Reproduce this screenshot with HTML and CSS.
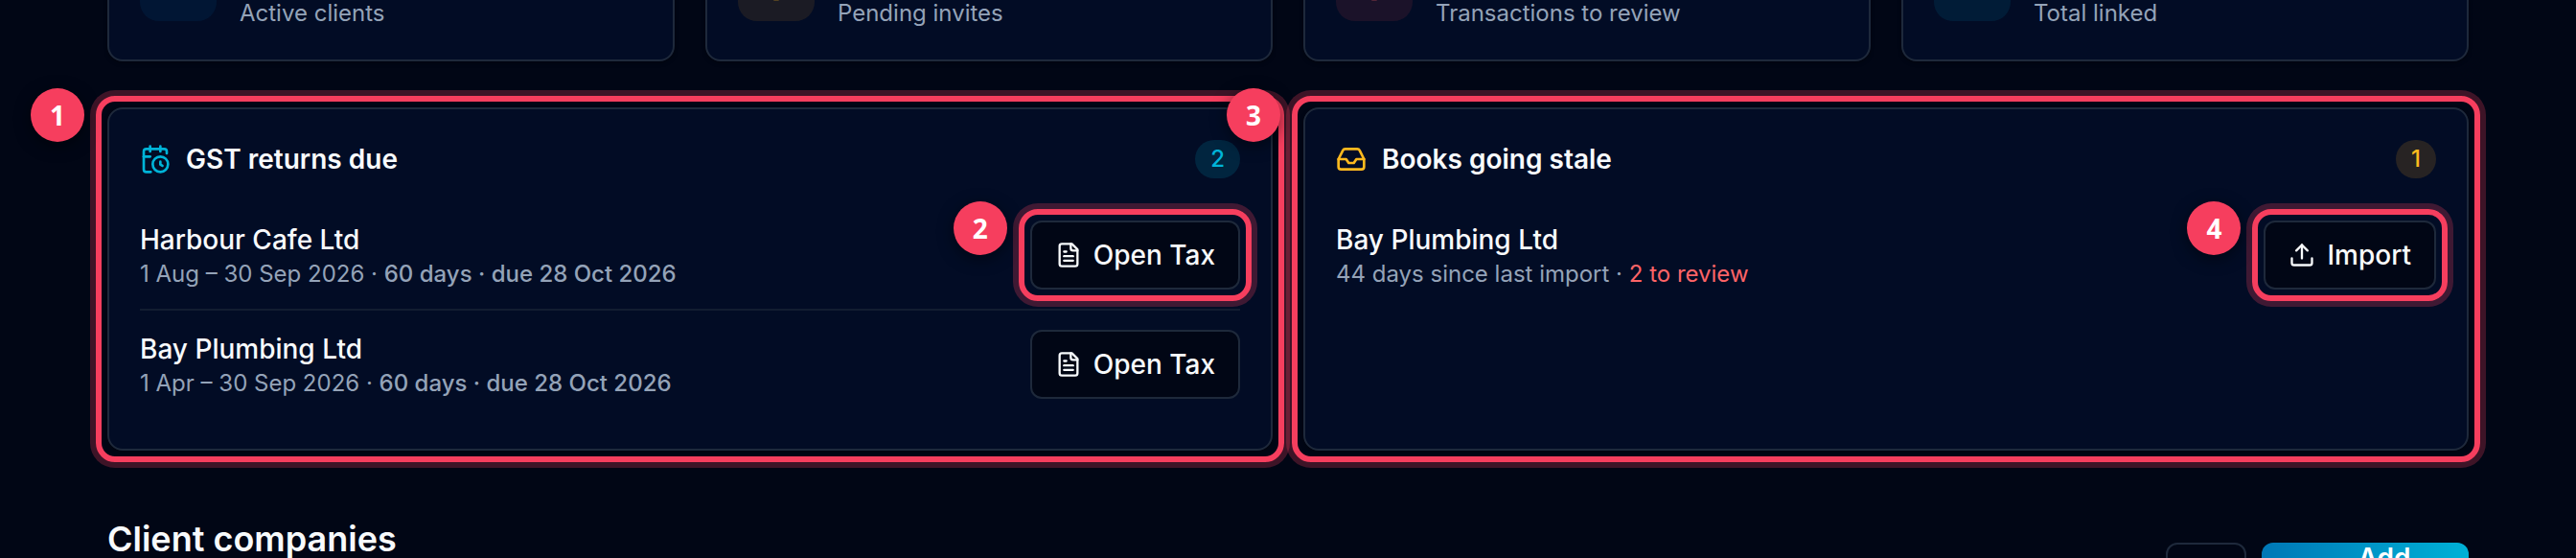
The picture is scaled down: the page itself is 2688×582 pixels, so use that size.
FILE: index.html
```html
<!doctype html>
<html lang="en">
<head>
    <meta charset="UTF-8">
    <meta name="viewport" content="width=device-width, initial-scale=1.0">
    <title>Client dashboard</title>
    <link rel="stylesheet" href="styles.css">
</head>
<body>
<main class="page">
    <section class="stats">
        <div class="card stat">
            <div class="tile tile-blue"></div>
            <p class="stat-label">Active clients</p>
        </div>
        <div class="card stat">
            <div class="tile tile-amber">
                <svg class="icon icon-lg" viewBox="0 0 24 24"><circle cx="12" cy="12" r="10"/><path d="M12 6v6l4 2"/></svg>
            </div>
            <p class="stat-label">Pending invites</p>
        </div>
        <div class="card stat">
            <div class="tile tile-red">
                <svg class="icon icon-lg" viewBox="0 0 24 24"><circle cx="12" cy="12" r="10"/><path d="M12 8v4"/><path d="M12 16h.01"/></svg>
            </div>
            <p class="stat-label">Transactions to review</p>
        </div>
        <div class="card stat">
            <div class="tile tile-cyan"></div>
            <p class="stat-label">Total linked</p>
        </div>
    </section>

    <section class="panels">
        <div class="card panel marked">
            <span class="marker">1</span>
            <header class="panel-head">
                <svg class="icon icon-md cyan" viewBox="0 0 24 24"><path d="M16 14v2.2l1.6 1"/><path d="M16 2v4"/><path d="M21 7.5V6a2 2 0 0 0-2-2H5a2 2 0 0 0-2 2v14a2 2 0 0 0 2 2h3.5"/><path d="M3 10h5"/><path d="M8 2v4"/><circle cx="16" cy="16" r="6"/></svg>
                <h2 class="panel-title">GST returns due</h2>
                <span class="count count-cyan">2</span>
            </header>
            <ul class="rows">
                <li class="row">
                    <div class="row-text">
                        <p class="name">Harbour Cafe Ltd</p>
                        <p class="meta">1 Aug – 30 Sep 2026 · <span class="due">60 days · due 28 Oct 2026</span></p>
                    </div>
                    <div class="marked marked-btn">
                        <span class="marker">2</span>
                        <button class="btn" type="button">
                            <svg class="icon icon-sm" viewBox="0 0 24 24"><path d="M15 2H6a2 2 0 0 0-2 2v16a2 2 0 0 0 2 2h12a2 2 0 0 0 2-2V7Z"/><path d="M14 2v4a2 2 0 0 0 2 2h4"/><path d="M10 9H8"/><path d="M16 13H8"/><path d="M16 17H8"/></svg>
                            Open Tax
                        </button>
                    </div>
                </li>
                <li class="row">
                    <div class="row-text">
                        <p class="name">Bay Plumbing Ltd</p>
                        <p class="meta">1 Apr – 30 Sep 2026 · <span class="due">60 days · due 28 Oct 2026</span></p>
                    </div>
                    <button class="btn" type="button">
                        <svg class="icon icon-sm" viewBox="0 0 24 24"><path d="M15 2H6a2 2 0 0 0-2 2v16a2 2 0 0 0 2 2h12a2 2 0 0 0 2-2V7Z"/><path d="M14 2v4a2 2 0 0 0 2 2h4"/><path d="M10 9H8"/><path d="M16 13H8"/><path d="M16 17H8"/></svg>
                        Open Tax
                    </button>
                </li>
            </ul>
        </div>

        <div class="card panel marked">
            <span class="marker">3</span>
            <header class="panel-head">
                <svg class="icon icon-md amber" viewBox="0 0 24 24"><path d="M22 12h-6l-2 3h-4l-2-3H2"/><path d="M5.45 5.11 2 12v6a2 2 0 0 0 2 2h16a2 2 0 0 0 2-2v-6l-3.45-6.89A2 2 0 0 0 16.76 4H7.24a2 2 0 0 0-1.79 1.11z"/></svg>
                <h2 class="panel-title">Books going stale</h2>
                <span class="count count-amber">1</span>
            </header>
            <ul class="rows">
                <li class="row">
                    <div class="row-text">
                        <p class="name">Bay Plumbing Ltd</p>
                        <p class="meta">44 days since last import · <span class="alert">2 to review</span></p>
                    </div>
                    <div class="marked marked-btn">
                        <span class="marker">4</span>
                        <button class="btn" type="button">
                            <svg class="icon icon-sm" viewBox="0 0 24 24"><path d="M12 3v12"/><path d="m17 8-5-5-5 5"/><path d="M21 15v4a2 2 0 0 1-2 2H5a2 2 0 0 1-2-2v-4"/></svg>
                            Import
                        </button>
                    </div>
                </li>
            </ul>
        </div>
    </section>

    <section class="companies">
        <h2 class="section-title">Client companies</h2>
        <div class="actions">
            <button class="btn btn-square" type="button" aria-label="Refresh"></button>
            <button class="btn btn-primary" type="button">
                <svg class="icon icon-sm" viewBox="0 0 24 24"><path d="M5 12h14"/><path d="M12 5v14"/></svg>
                <span class="btn-label">Add client</span>
            </button>
        </div>
    </section>
</main>
</body>
</html>
```
FILE: styles.css
```css
* {
    margin: 0;
    padding: 0;
    box-sizing: border-box;
}

body {
    height: 100vh;
    overflow: hidden;
    background: #010615;
    color: #f8fafc;
    font-family: Inter, "Liberation Sans", sans-serif;
    font-size: 28px;
    line-height: 40px;
}

/* the view is scrolled part way down the stat cards */
.page {
    margin-top: -100px;
    padding: 0 112px;
}

.card {
    background: #020c25;
    border: 2px solid #1e293b;
    border-radius: 16px;
    box-shadow: 0 2px 4px rgba(0, 0, 0, .3);
}

.icon {
    flex: none;
    fill: none;
    stroke: currentColor;
    stroke-width: 2;
    stroke-linecap: round;
    stroke-linejoin: round;
}

.icon-sm {
    width: 28px;
    height: 28px;
}

.icon-md {
    width: 32px;
    height: 32px;
}

.icon-lg {
    width: 40px;
    height: 40px;
}

.cyan {
    color: #00b4d8;
}

.amber {
    color: #fdb91e;
}

/* stats */
.stats {
    display: grid;
    grid-template-columns: repeat(4, 1fr);
    gap: 32px;
}

.stat {
    display: flex;
    align-items: center;
    gap: 24px;
    padding: 32px;
}

.tile {
    display: flex;
    align-items: center;
    justify-content: center;
    width: 80px;
    height: 80px;
    border-radius: 20px;
}

.tile-blue {
    background: rgba(0, 119, 182, .1);
}

.tile-amber {
    background: rgba(253, 165, 30, .1);
    color: #fdb91e;
}

.tile-red {
    background: rgba(251, 80, 80, .1);
    color: #fb6464;
}

.tile-cyan {
    background: rgba(0, 180, 216, .1);
}

.stat-label {
    padding-top: 64px;
    font-size: 24px;
    line-height: 32px;
    color: #94a3b8;
}

/* panels */
.panels {
    display: grid;
    grid-template-columns: 1fr 1fr;
    gap: 32px;
    margin-top: 48px;
}

.panel {
    padding: 32px;
}

.panel-head {
    display: flex;
    align-items: center;
    gap: 16px;
    margin-bottom: 24px;
}

.panel-title {
    font-size: 28px;
    font-weight: 600;
}

.count {
    margin-left: auto;
    padding: 4px 16px;
    border-radius: 20px;
    font-size: 24px;
    font-weight: 500;
    line-height: 32px;
}

.count-cyan {
    background: rgba(0, 180, 216, .15);
    color: #00b4d8;
}

.count-amber {
    background: rgba(253, 165, 30, .15);
    color: #fdb91e;
}

.rows {
    list-style: none;
}

.row {
    display: flex;
    align-items: center;
    justify-content: space-between;
    padding: 20px 0;
}

.row + .row {
    border-top: 2px solid rgba(30, 41, 59, .6);
}

.name {
    font-weight: 500;
}

.meta {
    font-size: 24px;
    line-height: 32px;
    color: #94a3b8;
}

.due {
    font-weight: 500;
}

.alert {
    color: #ff6467;
}

.btn {
    display: flex;
    align-items: center;
    justify-content: center;
    gap: 12px;
    height: 72px;
    padding: 0 24px;
    border: 2px solid #1e293b;
    border-radius: 12px;
    background: #010615;
    color: #f8fafc;
    font: inherit;
    font-weight: 500;
}

/* numbered highlights */
.marked {
    position: relative;
}

.marked::after {
    content: "";
    position: absolute;
    inset: -14px;
    border: 6px solid #f63e5e;
    border-radius: 20px;
    box-shadow: 0 0 0 6px rgba(246, 62, 94, .25);
    pointer-events: none;
}

.marked-btn::after {
    inset: -12px;
}

.marker {
    position: absolute;
    z-index: 1;
    left: -82px;
    top: -22px;
    width: 56px;
    height: 56px;
    border-radius: 50%;
    background: #f63e5e;
    color: #fff;
    box-shadow: 0 4px 16px rgba(0, 0, 0, .5);
    font-family: "Noto Sans", sans-serif;
    font-size: 28px;
    font-weight: 700;
    line-height: 56px;
    text-align: center;
}

.marked-btn .marker {
    left: -80px;
    top: -20px;
}

/* client companies */
.companies {
    display: flex;
    justify-content: space-between;
    align-items: flex-start;
    margin-top: 64px;
}

.section-title {
    font-size: 36px;
    font-weight: 600;
    line-height: 56px;
}

.actions {
    display: flex;
    gap: 16px;
    padding-top: 32px;
}

.btn-square {
    width: 84px;
}

.btn-primary {
    width: 216px;
    border: 0;
    background: linear-gradient(100deg, #0077b6, #00b4d8);
    color: #fff;
    font-weight: 600;
}

.btn-label {
    width: min-content;
    padding: 0 24px;
}
```
